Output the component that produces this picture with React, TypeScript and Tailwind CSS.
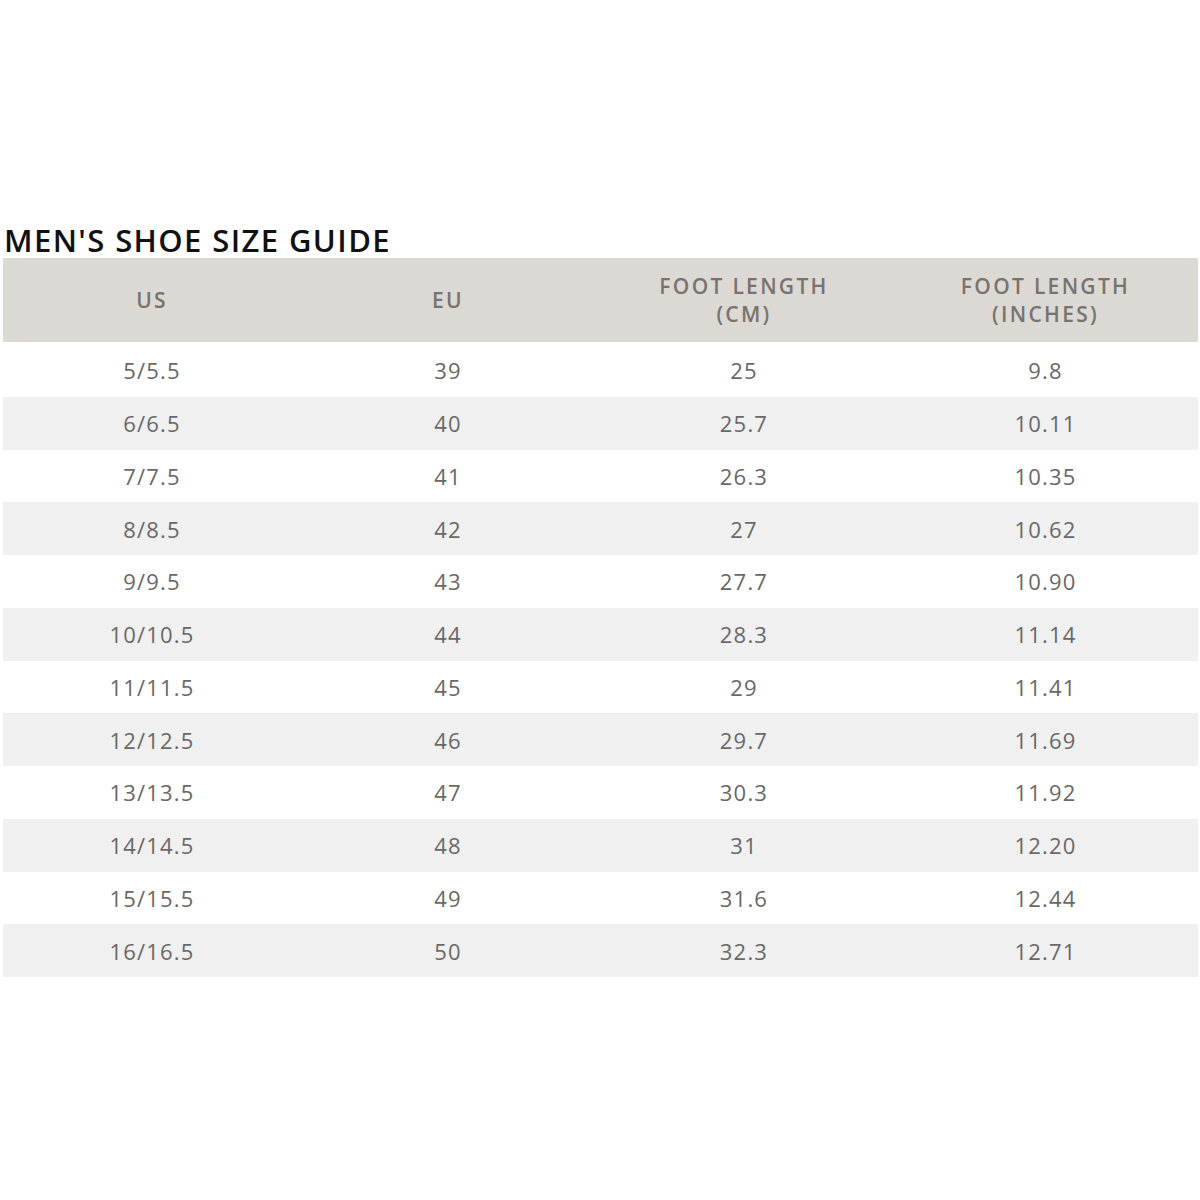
import React from "react"

const rows = [
    ["5/5.5", "39", "25", "9.8"],
    ["6/6.5", "40", "25.7", "10.11"],
    ["7/7.5", "41", "26.3", "10.35"],
    ["8/8.5", "42", "27", "10.62"],
    ["9/9.5", "43", "27.7", "10.90"],
    ["10/10.5", "44", "28.3", "11.14"],
    ["11/11.5", "45", "29", "11.41"],
    ["12/12.5", "46", "29.7", "11.69"],
    ["13/13.5", "47", "30.3", "11.92"],
    ["14/14.5", "48", "31", "12.20"],
    ["15/15.5", "49", "31.6", "12.44"],
    ["16/16.5", "50", "32.3", "12.71"],
]

const cols = "grid grid-cols-[298px_294px_298px_305px]"

export default function App() {
    return (
        <div className="w-[1200px] h-[1200px] bg-white font-['Open_Sans',sans-serif] pt-[222px] pl-[3px]">
            <h1 className="text-[31px] leading-[36px] font-semibold text-[#111] tracking-[1.4px] pl-[1px]">
                MEN'S SHOE SIZE GUIDE
            </h1>
            <div className="w-[1195px]">
                <div className={`${cols} h-[84px] bg-[#dcd8d3] items-center text-[21px] leading-[28px] font-semibold text-[#77736f] tracking-[2.3px]`}>
                    <div className="text-center">US</div>
                    <div className="text-center">EU</div>
                    <div className="text-center">FOOT LENGTH<br />(CM)</div>
                    <div className="text-center">FOOT LENGTH<br />(INCHES)</div>
                </div>
                <div className="mt-[2px]">
                    {rows.map((r, i) => (
                        <div
                            key={i}
                            className={`${cols} h-[52.75px] items-center text-[22px] leading-[30px] tracking-[1.2px] text-[#686868] ${i % 2 === 1 ? "bg-[#f0f0f0]" : "bg-white"}`}
                        >
                            {r.map((c, j) => (
                                <div key={j} className="text-center">{c}</div>
                            ))}
                        </div>
                    ))}
                </div>
            </div>
        </div>
    )
}
